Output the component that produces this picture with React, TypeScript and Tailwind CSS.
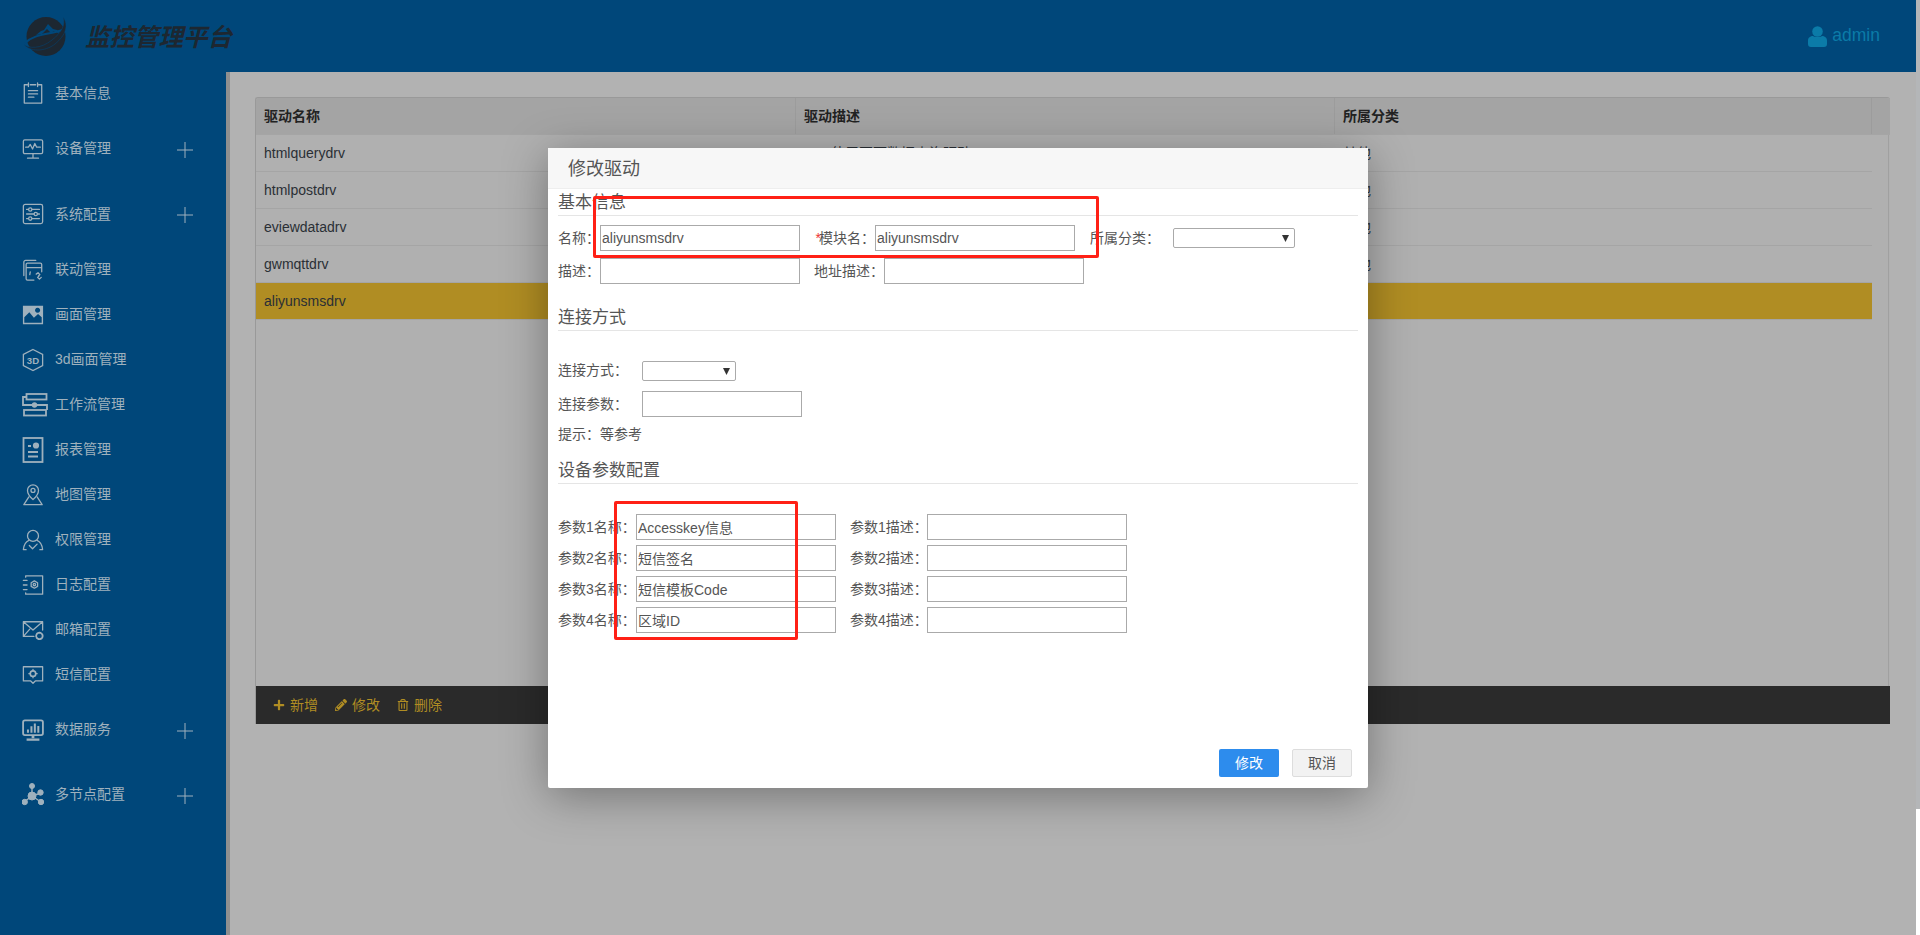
import type { ReactNode } from 'react';
import { FaPencilAlt, FaPlus, FaRegTrashAlt } from 'react-icons/fa';

const FONT = 'font-["Liberation_Sans","Noto_Sans_CJK_SC",sans-serif]';

function Svg({ children, size = 22 }: { children: ReactNode; size?: number }) {
  return (
    <svg width={size} height={size} viewBox="0 0 24 24" fill="none" stroke="currentColor" strokeWidth="1.4" strokeLinecap="round" strokeLinejoin="round">
      {children}
    </svg>
  );
}

const icons: Record<string, ReactNode> = {
  info: (
    <Svg>
      <path d="M6 3H2.5v20h19V3H18M9 3h6" />
      <path d="M7 1v4M17 1v4M7 9.5h10M7 13h10M7 16.5h6" />
    </Svg>
  ),
  device: (
    <Svg>
      <rect x="1.5" y="2" width="21" height="15" rx="1.5" />
      <path d="M4 10h3l2-3 2.5 5 2.5-6 2 4h4M12 17v4M6 22h12" />
    </Svg>
  ),
  system: (
    <Svg>
      <rect x="1.5" y="1.5" width="21" height="21" rx="2" />
      <path d="M5 7h2M11 7h8M5 12h8M17 12h2M5 17h2M11 17h8" />
      <circle cx="9" cy="7" r="1.8" />
      <circle cx="15" cy="12" r="1.8" />
      <circle cx="9" cy="17" r="1.8" />
    </Svg>
  ),
  link: (
    <Svg>
      <path d="M2 18V3.5A2 2 0 0 1 4 1.5h11" />
      <path d="M13 23H6a1.500 1.500 0 0 1-1.500-1.500V6A1.500 1.500 0 0 1 6 4.500h14A1.500 1.500 0 0 1 21.500 6v8M5 9.500h16M9 14l-.5 3" />
      <path d="M15.500 16.500l2-1.500 2 2-1.500 1.500M21 20l-2 2-2-2 1.500-1.500" />
    </Svg>
  ),
  image: (
    <svg width="22" height="22" viewBox="0 0 24 24" fill="currentColor">
      <path fillRule="evenodd" d="M1 2h22v20H1zM2.500 20.500h19v-6l-4-3.500-4.500 4-5-6-5.500 5.500zM17 4a2.800 2.800 0 1 0 .01 0z" />
    </svg>
  ),
  three: (
    <svg width="22" height="24" viewBox="0 0 24 26" fill="none" stroke="currentColor" strokeWidth="1.4">
      <path d="M12 1.500l10.500 5.500v12L12 24.500 1.500 19V7z" />
      <text x="12" y="17.500" textAnchor="middle" fontSize="10.500" fontWeight="700" fill="currentColor" stroke="none" fontFamily="Liberation Sans, sans-serif">3D</text>
    </svg>
  ),
  flow: (
    <svg width="26" height="26" viewBox="0 0 26 26" fill="none" stroke="currentColor" strokeWidth="1.800">
      <rect x="4.500" y="2" width="20" height="5.500" />
      <rect x="2" y="18" width="22" height="5.500" />
      <path d="M4.500 5H1v8h24V18M1 13" />
      <circle cx="12.500" cy="13" r="1.800" fill="currentColor" />
    </svg>
  ),
  report: (
    <svg width="22" height="26" viewBox="0 0 22 26" fill="none" stroke="currentColor" strokeWidth="1.800">
      <rect x="1.500" y="1" width="19" height="24" />
      <path d="M6 9h3M6 15h10M6 19.500h10" />
      <circle cx="14" cy="8.500" r="2.200" fill="currentColor" />
    </svg>
  ),
  map: (
    <Svg>
      <path d="M12 17s-6-5.500-6-10a6 6 0 0 1 12 0c0 4.500-6 10-6 10z" />
      <circle cx="12" cy="7" r="2.200" />
      <path d="M7.500 14L2 22.500h20L16.500 14" />
    </Svg>
  ),
  auth: (
    <Svg>
      <circle cx="12" cy="7.500" r="6" />
      <path d="M7.500 12.500C4 14 2 18 1.500 22.500h3M16.500 12.500c3.500 1.500 5.500 5.500 6 10h-3M8 18l3.500 3.500 5-5" />
    </Svg>
  ),
  log: (
    <Svg>
      <path d="M4 3.500V2h18.500v20H4v-1.500" />
      <path d="M1.500 7h4M1.500 12h4M1.500 17h4" />
      <path d="M13.500 7.500l3.500 2v4l-3.500 2-3.500-2v-4z" />
      <circle cx="13.500" cy="11.500" r="1.300" />
    </Svg>
  ),
  mail: (
    <Svg>
      <path d="M13 19H1.500V3h21v9M1.500 3l10.500 9 10.500-9M1.500 19l7-8" />
      <circle cx="19" cy="18.500" r="3.500" strokeWidth="2" strokeDasharray="1.500 1" />
    </Svg>
  ),
  sms: (
    <Svg>
      <path d="M1.500 3h21v15.500h-8L12 21l-2.500-2.500h-8z" />
      <circle cx="12" cy="10.500" r="3" strokeWidth="1.800" />
      <path d="M12 6v1M12 14v1M7.500 10.500h1M15.500 10.500h1" />
    </Svg>
  ),
  data: (
    <svg width="22" height="22" viewBox="0 0 24 24" fill="none" stroke="currentColor">
      <rect x="1.200" y="1.500" width="21.600" height="16" rx="2" strokeWidth="2" />
      <path d="M6.500 15v-3.500M10.300 15V8M14 15V5M17.800 15V7.500" strokeWidth="2.200" />
      <path d="M12 18v3" strokeWidth="3" />
      <path d="M5 22.500h14" strokeWidth="2.500" />
    </svg>
  ),
  node: (
    <svg width="22" height="24" viewBox="0 0 22 24" fill="currentColor" stroke="currentColor">
      <path d="M10 13L10 3M10 13L19 10M10 13L2 19M10 13L19 19" strokeWidth="1.400" />
      <circle cx="10" cy="3" r="2.500" />
      <circle cx="18.500" cy="9.500" r="2.700" />
      <circle cx="2.700" cy="19" r="2.700" />
      <circle cx="19" cy="19" r="2.700" />
      <circle cx="10" cy="13" r="4" />
    </svg>
  ),
};

const menu = [
  { icon: 'info', label: '基本信息', h: 'h-[44px] pb-[2px]' },
  { icon: 'device', label: '设备管理', h: 'h-[65px]', plus: true },
  { icon: 'system', label: '系统配置', h: 'h-[66px]', plus: true },
  { icon: 'link', label: '联动管理', h: 'h-[45px]' },
  { icon: 'image', label: '画面管理', h: 'h-[45px]' },
  { icon: 'three', label: '3d画面管理', h: 'h-[45px]' },
  { icon: 'flow', label: '工作流管理', h: 'h-[45px]' },
  { icon: 'report', label: '报表管理', h: 'h-[45px]' },
  { icon: 'map', label: '地图管理', h: 'h-[45px]' },
  { icon: 'auth', label: '权限管理', h: 'h-[45px]' },
  { icon: 'log', label: '日志配置', h: 'h-[45px]' },
  { icon: 'mail', label: '邮箱配置', h: 'h-[45px]' },
  { icon: 'sms', label: '短信配置', h: 'h-[45px]' },
  { icon: 'data', label: '数据服务', h: 'h-[65px]', plus: true },
  { icon: 'node', label: '多节点配置', h: 'h-[65px]', plus: true },
];

const rows = [
  { name: 'htmlquerydrv', desc: '使用页面数据查询驱动', type: '其他' },
  { name: 'htmlpostdrv', desc: '', type: '其他' },
  { name: 'eviewdatadrv', desc: '', type: '其他' },
  { name: 'gwmqttdrv', desc: '', type: '其他' },
  { name: 'aliyunsmsdrv', desc: '', type: '', active: true },
];

function Logo() {
  return (
    <svg width="46" height="41" viewBox="0 0 46 41" className="shrink-0">
      <circle cx="23" cy="20.500" r="19.500" fill="#1d2731" />
      <path d="M13 19l5-4 3-1 4-6 5 5 4 1 3 4-6-3-3 2-4-4-5 5z" fill="#00477a" />
      <path d="M2 27C12 17 28 19 42 13" fill="none" stroke="#00477a" strokeWidth="2" />
      <path d="M40 1c6 8 3 18-8 27C22 36 6 36 1 28c4 5 17 5 28-4C38 17 43 9 40 1z" fill="#1d2731" stroke="#00477a" strokeWidth="0.500" />
    </svg>
  );
}

function Header() {
  return (
    <header className="flex h-[72px] shrink-0 items-center justify-between bg-[#00477a]">
      <div className="flex items-center pl-[23px]">
        <Logo />
        <span className='ml-[16px] text-[24.5px] leading-none font-bold text-[#1d2731] italic font-["Noto_Sans_CJK_SC",sans-serif]'>监控管理平台</span>
      </div>
      <div className="flex items-center gap-[5px] pr-[36px] text-[#0b7ba8]">
        <svg width="19" height="21" viewBox="0 0 19 21" fill="currentColor">
          <circle cx="9.500" cy="5.500" r="5.300" />
          <path d="M0 14.500C0 11.500 2.500 10 5 10c1.500 1.300 7.500 1.300 9 0 2.500 0 5 1.500 5 4.500V18a3 3 0 0 1-3 3H3a3 3 0 0 1-3-3z" />
        </svg>
        <span className="text-[17.500px] leading-none">admin</span>
      </div>
    </header>
  );
}

function Sidebar() {
  return (
    <aside className="flex w-[226px] shrink-0 flex-col bg-[#00477a] text-[#9fb1bd]">
      {menu.map(m => (
        <div key={m.label} className={`relative flex items-center pl-[22px] ${m.h}`}>
          <span className="flex w-[33px] shrink-0 items-center justify-start">{icons[m.icon]}</span>
          <span className="text-[14px]">{m.label}</span>
          {m.plus && (
            <svg width="16" height="16" viewBox="0 0 16 16" stroke="currentColor" className="mt-[2px] mr-[33px] ml-auto">
              <path d="M8 0v16M0 8h16" />
            </svg>
          )}
        </div>
      ))}
    </aside>
  );
}

function Table() {
  return (
    <div className="flex h-[627px] w-[1635px] flex-col overflow-hidden rounded-t-[3px] border-t border-l border-[#999] bg-[#b0b0b0]">
      <div className="grid h-[37px] shrink-0 grid-cols-[540px_539px_537px_18px] border-b border-[#a5a5a5] bg-[#a4a4a4] text-[14px] font-bold text-[#222]">
        <div className="flex items-center border-r border-[#9c9c9c] pl-[8px]">驱动名称</div>
        <div className="flex items-center border-r border-[#9c9c9c] pl-[8px]">驱动描述</div>
        <div className="flex items-center border-r border-[#9c9c9c] pl-[8px]">所属分类</div>
        <div />
      </div>
      <div className="mr-[1px] min-h-0 flex-1 border-r border-[#a0a0a0]">
        {rows.map(r => (
          <div
            key={r.name}
            className={`grid h-[37px] w-[1616px] grid-cols-[540px_539px_537px] border-b border-[#a5a5a5] text-[14px] text-[#2a2f35] ${r.active ? 'bg-[#b08d23]' : ''}`}
          >
            <div className="flex items-center pl-[8px]">{r.name}</div>
            <div className="flex items-center pl-[35px]">{r.desc}</div>
            <div className="flex items-center pl-[8px]">{r.type}</div>
          </div>
        ))}
      </div>
      <div className="flex h-[38px] shrink-0 items-center bg-[#2a2a2a] pl-[17px] text-[14px] text-[#b08d23]">
        <span className="flex items-center">
          <FaPlus size={12} className="mr-[5px]" />新增
        </span>
        <span className="ml-[17px] flex items-center">
          <FaPencilAlt size={12} className="mr-[5px]" />修改
        </span>
        <span className="ml-[17px] flex items-center">
          <FaRegTrashAlt size={12} className="mr-[5px]" />删除
        </span>
      </div>
    </div>
  );
}

function Field({ value = '', w = 'w-[200px]' }: { value?: string; w?: string }) {
  return (
    <input
      readOnly
      value={value}
      className={`h-[26px] shrink-0 border border-[#aaa] bg-white px-[1px] text-[14px] text-[#555] outline-none ${w}`}
    />
  );
}

function Dropdown({ w }: { w: string }) {
  return (
    <div className={`relative h-[20px] shrink-0 rounded-[2px] border border-[#aaa] bg-white ${w}`}>
      <svg width="7" height="7" viewBox="0 0 7 7" className="absolute top-[6px] right-[5px]">
        <path d="M0 0h7L3.500 7z" fill="#333" />
      </svg>
    </div>
  );
}

function Section({ title, className = '' }: { title: string; className?: string }) {
  return <div className={`border-b border-[#e5e5e5] text-[17px] leading-[25px] text-[#555] ${className}`}>{title}</div>;
}

function Modal() {
  const params = [
    ['参数1名称：', 'Accesskey信息', '参数1描述：'],
    ['参数2名称：', '短信签名', '参数2描述：'],
    ['参数3名称：', '短信模板Code', '参数3描述：'],
    ['参数4名称：', '区域ID', '参数4描述：'],
  ];

  return (
    <div className="absolute top-[148px] left-[548px] flex h-[640px] w-[820px] flex-col rounded-[2px] bg-white text-[14px] text-[#555] shadow-[0_8px_45px_rgba(0,0,0,0.35)]">
      <div className="flex h-[41px] shrink-0 items-center border-b border-[#eee] bg-[#f7f7f7] pt-[2px] pl-[20px] text-[18px] text-[#555]">修改驱动</div>
      <div className="flex-1 px-[10px]">
        <Section title="基本信息" className="mt-[1px]" />
        <div className="mt-[9px] flex items-center">
          <span className="w-[42px] shrink-0">名称：</span>
          <Field value="aliyunsmsdrv" />
          <span className="w-[75px] shrink-0 text-right whitespace-nowrap"><span className="-mr-[2px] text-[#e33]">*</span>模块名：</span>
          <Field value="aliyunsmsdrv" />
          <span className="ml-[15px] w-[83px] shrink-0 whitespace-nowrap">所属分类：</span>
          <Dropdown w="w-[122px]" />
        </div>
        <div className="mt-[7px] flex items-center">
          <span className="w-[42px] shrink-0">描述：</span>
          <Field />
          <span className="ml-[14px] w-[70px] shrink-0 whitespace-nowrap">地址描述：</span>
          <Field />
        </div>

        <Section title="连接方式" className="mt-[21px]" />
        <div className="mt-[29px] flex items-center">
          <span className="w-[84px] shrink-0 whitespace-nowrap">连接方式：</span>
          <Dropdown w="w-[94px]" />
        </div>
        <div className="mt-[10px] flex items-center">
          <span className="w-[84px] shrink-0 whitespace-nowrap">连接参数：</span>
          <Field w="w-[160px]" />
        </div>
        <div className="mt-[7px] leading-[20px]">提示：等参考</div>

        <Section title="设备参数配置" className="mt-[14px]" />
        <div className="mt-[30px] flex flex-col gap-[5px]">
          {params.map(([a, v, b]) => (
            <div key={a} className="flex items-center">
              <span className="w-[78px] shrink-0 whitespace-nowrap">{a}</span>
              <Field value={v} />
              <span className="ml-[14px] w-[77px] shrink-0 whitespace-nowrap">{b}</span>
              <Field />
            </div>
          ))}
        </div>
      </div>
      <div className="flex justify-end gap-[13px] pr-[16px] pb-[11px]">
        <button className="h-[28px] w-[60px] rounded-[2px] bg-[#2d8ced] text-[14px] text-white">修改</button>
        <button className="h-[28px] w-[60px] rounded-[2px] border border-[#ddd] bg-[#f2f2f2] text-[14px] text-[#555]">取消</button>
      </div>
    </div>
  );
}

export default function App() {
  return (
    <div className={`relative flex h-[935px] w-[1920px] overflow-hidden bg-[#b2b2b2] ${FONT}`}>
      <div className="flex w-[1916px] shrink-0 flex-col">
        <Header />
        <div className="flex min-h-0 flex-1">
          <Sidebar />
          <div className="w-[4px] shrink-0 bg-[#8f8f8f]" />
          <div className="flex-1 pt-[25px] pl-[25px]">
            <Table />
          </div>
        </div>
      </div>
      <div className="flex flex-1 flex-col">
        <div className="h-[809px] bg-[#b4b6b8]" />
        <div className="flex-1 bg-white" />
      </div>

      <Modal />

      {/* red marks drawn on top of the screenshot */}
      <div className="absolute top-[196px] left-[593px] h-[62px] w-[506px] rounded-[2px] border-[3px] border-[#ff2016]" />
      <div className="absolute top-[501px] left-[614px] h-[139px] w-[184px] rounded-[2px] border-[3px] border-[#ff2016]" />
    </div>
  );
}
